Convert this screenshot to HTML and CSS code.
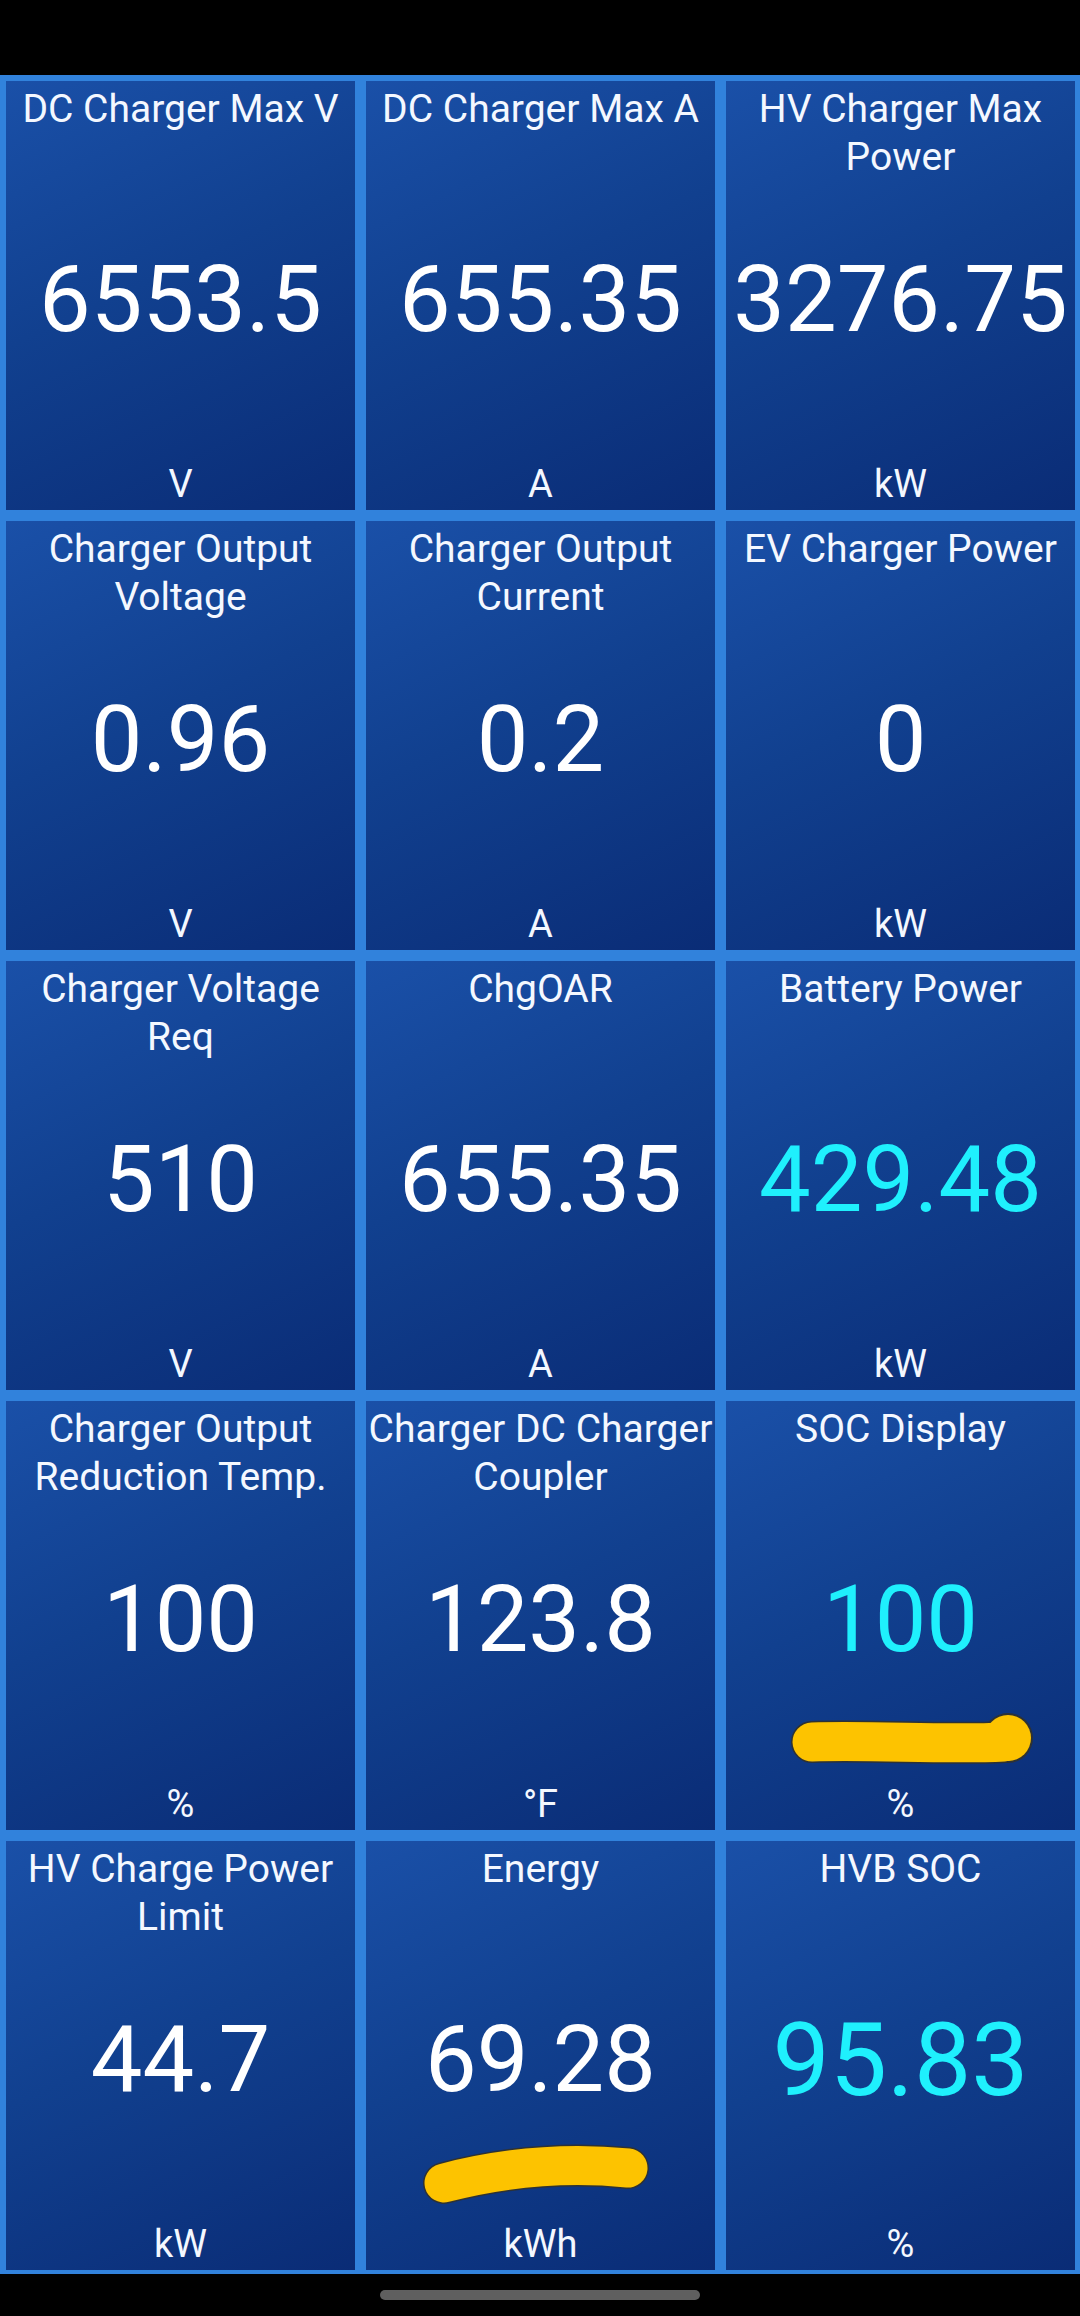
FILE: index.html
```html
<!DOCTYPE html>
<html lang="en">
<head>
  <meta charset="UTF-8">
  <title>Charging Dashboard</title>
  <link rel="stylesheet" href="styles.css">
</head>
<body>
  <div class="status-bar"></div>

  <div class="grid">
    <!-- row 1 -->
    <div class="tile">
      <div class="title">DC Charger Max V</div>
      <div class="value">6553.5</div>
      <div class="unit">V</div>
    </div>
    <div class="tile">
      <div class="title">DC Charger Max A</div>
      <div class="value">655.35</div>
      <div class="unit">A</div>
    </div>
    <div class="tile">
      <div class="title">HV Charger Max Power</div>
      <div class="value">3276.75</div>
      <div class="unit">kW</div>
    </div>

    <!-- row 2 -->
    <div class="tile">
      <div class="title">Charger Output Voltage</div>
      <div class="value">0.96</div>
      <div class="unit">V</div>
    </div>
    <div class="tile">
      <div class="title">Charger Output Current</div>
      <div class="value">0.2</div>
      <div class="unit">A</div>
    </div>
    <div class="tile">
      <div class="title">EV Charger Power</div>
      <div class="value">0</div>
      <div class="unit">kW</div>
    </div>

    <!-- row 3 -->
    <div class="tile">
      <div class="title">Charger Voltage Req</div>
      <div class="value">510</div>
      <div class="unit">V</div>
    </div>
    <div class="tile">
      <div class="title">ChgOAR</div>
      <div class="value">655.35</div>
      <div class="unit">A</div>
    </div>
    <div class="tile">
      <div class="title">Battery Power</div>
      <div class="value alert">429.48</div>
      <div class="unit">kW</div>
    </div>

    <!-- row 4 -->
    <div class="tile">
      <div class="title">Charger Output Reduction Temp.</div>
      <div class="value">100</div>
      <div class="unit">%</div>
    </div>
    <div class="tile">
      <div class="title">Charger DC Charger Coupler</div>
      <div class="value">123.8</div>
      <div class="unit">°F</div>
    </div>
    <div class="tile">
      <div class="title">SOC Display</div>
      <div class="value alert">100</div>
      <div class="unit">%</div>
      <svg class="marker" viewBox="0 0 349 429">
        <path class="ink-edge" d="M86 341 C150 339 220 344 278 341"/>
        <circle class="ink-edge-fill" cx="282" cy="337" r="25"/>
        <path class="ink" d="M86 341 C150 339 220 344 278 341"/>
        <circle class="ink-fill" cx="282" cy="337" r="23"/>
      </svg>
    </div>

    <!-- row 5 -->
    <div class="tile">
      <div class="title">HV Charge Power Limit</div>
      <div class="value">44.7</div>
      <div class="unit">kW</div>
    </div>
    <div class="tile">
      <div class="title">Energy</div>
      <div class="value">69.28</div>
      <div class="unit">kWh</div>
      <svg class="marker" viewBox="0 0 349 429">
        <path class="ink-edge" d="M78 342 Q170 318 262 327"/>
        <path class="ink" d="M78 342 Q170 318 262 327"/>
      </svg>
    </div>
    <div class="tile">
      <div class="title">HVB SOC</div>
      <div class="value alert big">95.83</div>
      <div class="unit">%</div>
    </div>
  </div>

  <div class="nav-bar"><span class="handle"></span></div>
</body>
</html>
```

FILE: styles.css
```css
body { margin: 0; background: #000; font-family: Roboto, "Noto Sans", Arial, sans-serif; color: #f4f8ff; }

.status-bar { height: 75px; background: #000; }

.grid {
  display: grid;
  grid-template-columns: repeat(3, 349px);
  grid-auto-rows: 429px;
  gap: 11px;
  padding: 6px 5px 4px 6px;
  background: #3182dc;
}

.tile {
  position: relative;
  display: grid;
  background: linear-gradient(155deg, #1a50a8 0%, #11408f 45%, #0a2c76 100%);
  padding: 4px 2px 2px;
  text-align: center;
  overflow: hidden;
}
.tile > .title, .tile > .value, .tile > .unit { grid-area: 1 / 1; }

.title { align-self: start; font-size: 39px; line-height: 48px; }
.value { align-self: center; font-size: 92px; line-height: 100px; padding-top: 6px; color: #fff; }
.value.alert { color: #1ff0fd; }
.value.big { font-size: 102px; }
.unit { align-self: end; font-size: 38px; line-height: 48px; }

.marker { position: absolute; left: 0; top: 0; width: 100%; height: 100%; }
.ink-edge { fill: none; stroke: #2e3234; stroke-width: 42; stroke-linecap: round; }
.ink { fill: none; stroke: #fdc300; stroke-width: 39; stroke-linecap: round; }
.ink-edge-fill { fill: #2e3234; }
.ink-fill { fill: #fdc300; }

.nav-bar { height: 42px; display: flex; justify-content: center; padding-top: 16px; box-sizing: border-box; }
.handle { width: 320px; height: 10px; border-radius: 5px; background: #5f5f5f; }
```
